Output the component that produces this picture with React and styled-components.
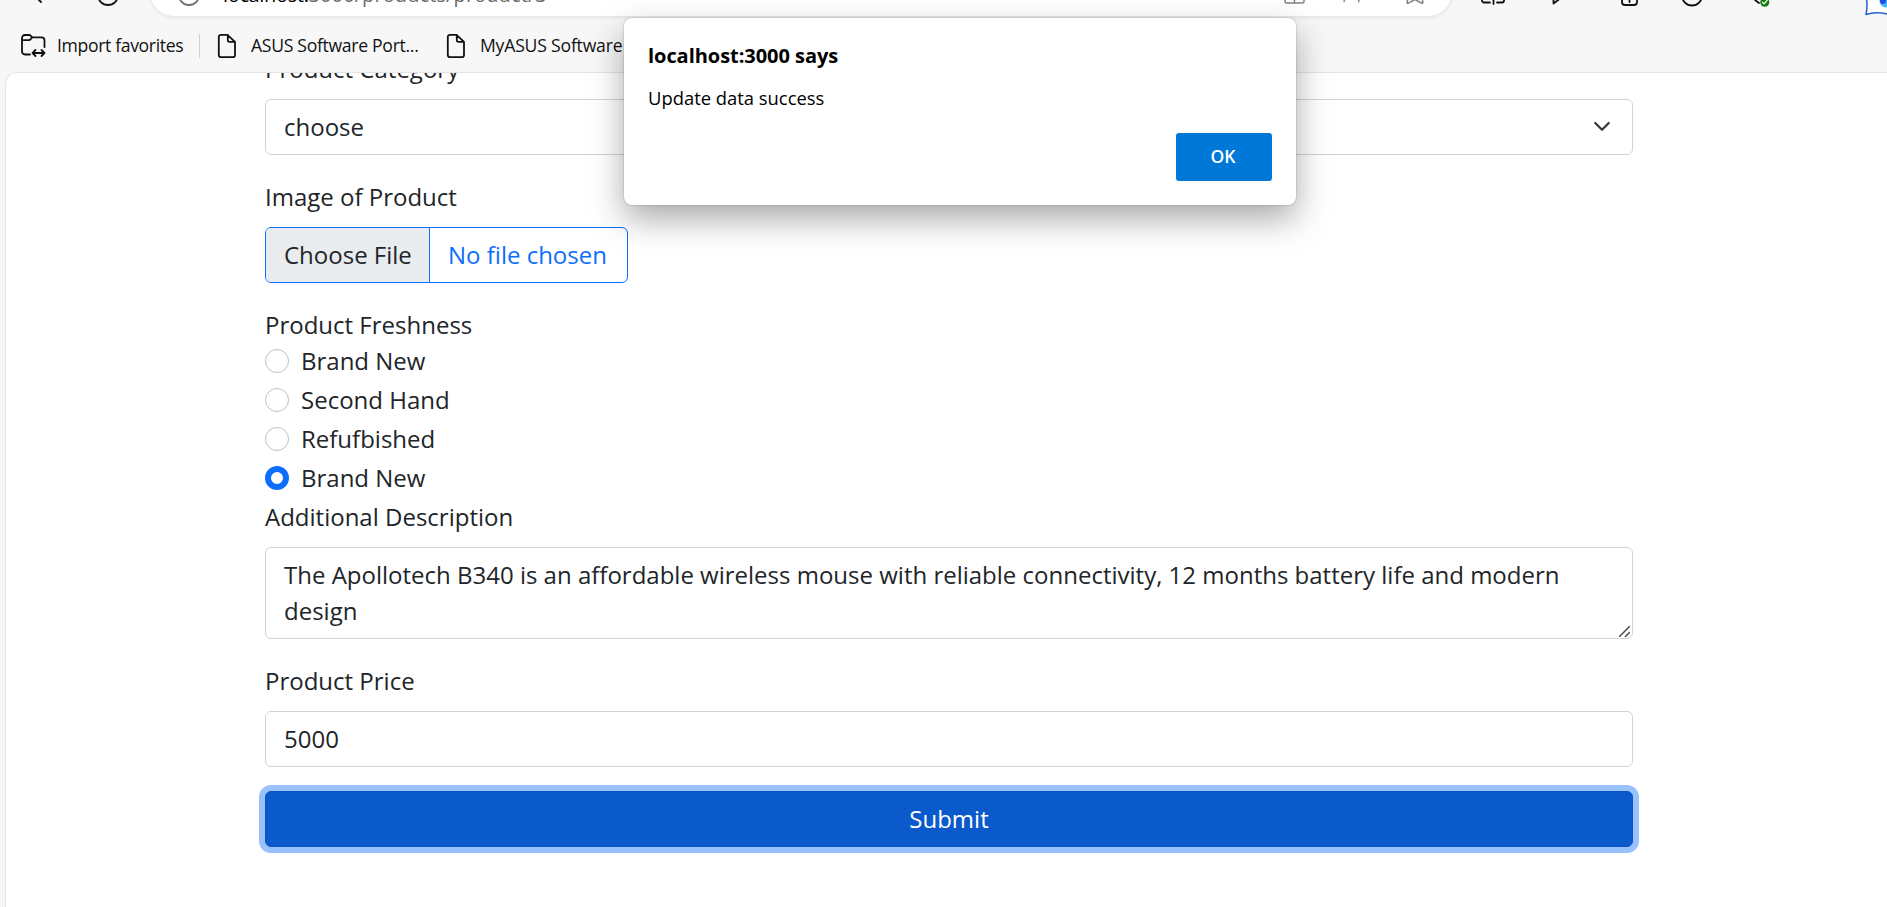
import React from "react";
import styled, { createGlobalStyle } from "styled-components";

const Global = createGlobalStyle`
  *, *::before, *::after { box-sizing: border-box; }
  html, body { margin: 0; height: 100%; overflow: hidden; background: #f7f7f7; }
`;

const Browser = styled.div`
  position: relative;
  width: 1887px;
  height: 907px;
  overflow: hidden;
  background: #f7f7f7;
  display: flex;
  flex-direction: column;
`;

const Toolbar = styled.div`
  height: 16px;
  flex: none;
  display: flex;
  align-items: flex-end;
`;

const NavButtons = styled.div`
  width: 150px;
  height: 16px;
`;

const AddressBar = styled.div`
  width: 1302px;
  height: 48px;
  border-radius: 24px;
  background: #fff;
  box-shadow: 0 1px 4px rgba(0, 0, 0, 0.1);
  display: flex;
  align-items: flex-end;
  padding-left: 27px;
`;

const UrlText = styled.div`
  font: 20px/28px "Open Sans", sans-serif;
  letter-spacing: 0.1px;
  color: #6b6b6b;
  margin: 0 0 7px 22px;
  b { font-weight: 400; color: #000; letter-spacing: -0.35px; }
`;

const AddressActions = styled.div`
  margin: 0 20px 0 auto;
  height: 16px;
`;

const ToolbarIcons = styled.div`
  flex: 1;
  height: 16px;
`;

const Glyphs = styled.svg`
  display: block;
  overflow: visible;
  fill: none;
  stroke: ${(p) => p.$color || "#111"};
  stroke-width: ${(p) => p.$weight || 1.8};
  stroke-linecap: round;
  stroke-linejoin: round;
`;

const Favorites = styled.div`
  height: 56px;
  flex: none;
  display: flex;
  align-items: center;
  padding: 3px 0 0 20px;
  font: 17.6px/24px "Open Sans", sans-serif;
  letter-spacing: -0.3px;
  color: #111;
  white-space: nowrap;
`;

const FavoriteLabel = styled.span`
  width: ${(p) => p.$width}px;
  margin-left: ${(p) => p.$gap}px;
  margin-top: -2px;
  letter-spacing: ${(p) => p.$spacing ?? -0.3}px;
`;

const Divider = styled.span`
  width: 1px;
  height: 24px;
  background: #cfcfcf;
  margin: 0 17px 0 16px;
`;

const Page = styled.main`
  flex: 1;
  margin-left: 5px;
  border: 1px solid #e4e4e4;
  border-width: 1px 0 0 1px;
  border-radius: 12px 0 0 0;
  background: #fff;
  overflow: hidden;
`;

const Form = styled.form`
  width: 1368px;
  margin: -22px 0 0 259px;
  display: flex;
  flex-direction: column;
  align-items: stretch;
  font: 24px/36px "Open Sans", sans-serif;
  color: #212529;
`;

const Label = styled.label`
  margin-bottom: ${(p) => (p.$tight ? 0 : 12)}px;
`;

const Control = styled.div`
  height: 56px;
  padding: 9px 21px 9px 18px;
  border: 1px solid #ced4da;
  border-radius: 6px;
  background: #fff;
  margin-bottom: 24px;
  display: flex;
  align-items: center;
  justify-content: space-between;
`;

const AreaWrap = styled.div`
  position: relative;
  display: grid;
  margin-bottom: 24px;
`;

const TextArea = styled.textarea`
  display: block;
  height: 92px;
  padding: 9px 18px;
  border: 1px solid #ced4da;
  border-radius: 6px;
  margin: 0;
  font: inherit;
  color: inherit;
  outline: 0;
  resize: none;
  overflow: hidden;
`;

const Grip = styled.svg`
  position: absolute;
  right: 3px;
  bottom: 2px;
  fill: none;
  stroke: #4c4c4c;
  stroke-width: 1.5;
`;

const FilePicker = styled.div`
  align-self: flex-start;
  width: 363px;
  height: 56px;
  display: flex;
  border: 1px solid #0d6efd;
  border-radius: 6px;
  overflow: hidden;
  margin-bottom: 24px;
  color: #0d6efd;
  line-height: 54px;
  white-space: nowrap;
`;

const FileButton = styled.span`
  width: 164px;
  padding-left: 18px;
  background: #e9ecef;
  color: #212529;
  border-right: 1px solid #0d6efd;
  margin-right: 18px;
`;

const Choice = styled.label`
  display: flex;
  align-items: center;
  height: 36px;
  margin-bottom: 3px;
`;

const Radio = styled.span`
  width: 24px;
  height: 24px;
  border-radius: 50%;
  border: ${(p) => (p.$checked ? "6px solid #0d6efd" : "1px solid #bfbfbf")};
  background: #fff;
  margin-right: 12px;
`;

const Submit = styled.button`
  height: 56px;
  border: 1px solid #0a53be;
  border-radius: 6px;
  background: #0b5acb;
  box-shadow: 0 0 0 6px #98c1fe;
  color: #fff;
  font: inherit;
  padding: 0;
`;

const Dialog = styled.section`
  position: absolute;
  left: 624px;
  top: 18px;
  width: 672px;
  height: 187px;
  padding: 24px;
  border-radius: 8px;
  background: #fff;
  box-shadow: 0 0 2px rgba(0, 0, 0, 0.3), 0 14px 34px rgba(0, 0, 0, 0.34);
  display: flex;
  flex-direction: column;
  font: 18.4px/28px "Open Sans", sans-serif;
  color: #000;
`;

const DialogTitle = styled.strong`
  font-size: 20px;
  font-weight: 700;
  letter-spacing: -0.05px;
  margin-bottom: 14px;
`;

const OkButton = styled.button`
  align-self: flex-end;
  margin-top: auto;
  width: 96px;
  height: 48px;
  border: 0;
  border-radius: 3px;
  background: #0078d7;
  color: #fff;
  font: 600 17.5px/24px "Open Sans", sans-serif;
  padding: 0 2px 2px 0;
`;

const FileIcon = () => (
  <Glyphs width="20" height="26" viewBox="0 0 20 26">
    <path d="M4 1.8h6.500l7.500 7V22a2.200 2.200 0 0 1-2.200 2.200H4A2.200 2.200 0 0 1 1.800 22V4A2.200 2.200 0 0 1 4 1.800ZM10.800 2V7a1.800 1.800 0 0 0 1.800 1.800H18" />
  </Glyphs>
);

const ImportIcon = () => (
  <Glyphs width="26" height="26" viewBox="0 0 26 26">
    <path d="M10 21.500H5A3 3 0 0 1 2 18.500V5a3 3 0 0 1 3-3h4.200c1 0 1.500.4 2 1.200L12 4.300h9.500a3 3 0 0 1 3 3V14" />
    <path d="M2 7.200h6.500c1.200 0 1.800-.4 2.300-1.200l1.200-1.700" />
    <path d="M12.500 20h12M15.500 17l-3 3 3 3M21.500 17l3 3-3 3" />
  </Glyphs>
);

const choices = ["Brand New", "Second Hand", "Refufbished", "Brand New"];

export default function App() {
  return (
    <Browser>
      <Global />
      <Toolbar>
        <NavButtons>
          <Glyphs width="150" height="16">
            <path d="M35-4l6 6M98-5a10 10 0 0 0 20 0" />
          </Glyphs>
        </NavButtons>
        <AddressBar>
          <Glyphs width="24" height="16" $color="#707070">
            <path d="M2-5a10 10 0 0 0 20 0" />
          </Glyphs>
          <UrlText><b>localhost:</b>3000/products/product/3</UrlText>
          <AddressActions>
            <Glyphs width="148" height="16" $color="#808080" $weight={1.5}>
              <path d="M1 -4V1.500a1.500 1.500 0 0 0 1.500 1.500h16a1.500 1.500 0 0 0 1.500-1.500V-4M10.500-4V3M60 1.500l2.500-6.500M75 1.500l-2.500-6.500M124.500-5l-1.300 7.200q-.2 1.600 1.300.9L131-.5l6.500 3.600q1.500.7 1.300-.9L137.500-5" />
            </Glyphs>
          </AddressActions>
        </AddressBar>
        <ToolbarIcons>
          <Glyphs width="435" height="16">
            <path d="M30-3V.5a2 2 0 0 0 2 2h6M45 2.500h5a2 2 0 0 0 2-2V-3M41.500-5V4M101.500-4v7.500l8-6M170-4V2a3 3 0 0 0 3 3h9a3 3 0 0 0 3-3V-4M177.500-3V2M230-4.500a10 10 0 0 0 20 0M303 0l4 3" />
            <circle cx="312.800" cy="2.200" r="4.500" fill="#107c10" stroke="none" />
            <path d="m310.500 2.300 1.600 1.600 3-3.500" stroke="#fff" strokeWidth="1.300" />
            <path d="M414-4q2 9 0 18.500 11-3.500 25 .5V-8Z" fill="#fff" stroke="#2360d5" strokeWidth="1.500" />
            <circle cx="434" cy="1" r="6.500" fill="#48b7fa" stroke="none" />
            <circle cx="431" cy="1" r="3" fill="#1f4fe0" stroke="none" />
          </Glyphs>
        </ToolbarIcons>
      </Toolbar>
      <Favorites>
        <ImportIcon />
        <FavoriteLabel $gap={11} $width={126} $spacing={-0.35}>Import favorites</FavoriteLabel>
        <Divider />
        <FileIcon />
        <FavoriteLabel $gap={14} $width={195}>ASUS Software Port...</FavoriteLabel>
        <FileIcon />
        <FavoriteLabel $gap={14} $width={142} $spacing={-0.2}>MyASUS Software</FavoriteLabel>
      </Favorites>
      <Page>
        <Form>
          <Label>Product Category</Label>
          <Control>
            choose
            <Glyphs width="18" height="18" viewBox="0 0 16 16" $color="#343a40" $weight={2}>
              <path d="m2 4.500 6 6 6-6" />
            </Glyphs>
          </Control>
          <Label>Image of Product</Label>
          <FilePicker><FileButton>Choose File</FileButton>No file chosen</FilePicker>
          <Label $tight>Product Freshness</Label>
          {choices.map((c, i) => (
            <Choice key={i}><Radio $checked={i === 3} />{c}</Choice>
          ))}
          <Label>Additional Description</Label>
          <AreaWrap>
            <TextArea readOnly value="The Apollotech B340 is an affordable wireless mouse with reliable connectivity, 12 months battery life and modern design" />
            <Grip width="11" height="11"><path d="M0 11 11 0M6 11l5-5" /></Grip>
          </AreaWrap>
          <Label>Product Price</Label>
          <Control>5000</Control>
          <Submit type="button">Submit</Submit>
        </Form>
      </Page>
      <Dialog>
        <DialogTitle>localhost:3000 says</DialogTitle>
        <span>Update data success</span>
        <OkButton>OK</OkButton>
      </Dialog>
    </Browser>
  );
}
